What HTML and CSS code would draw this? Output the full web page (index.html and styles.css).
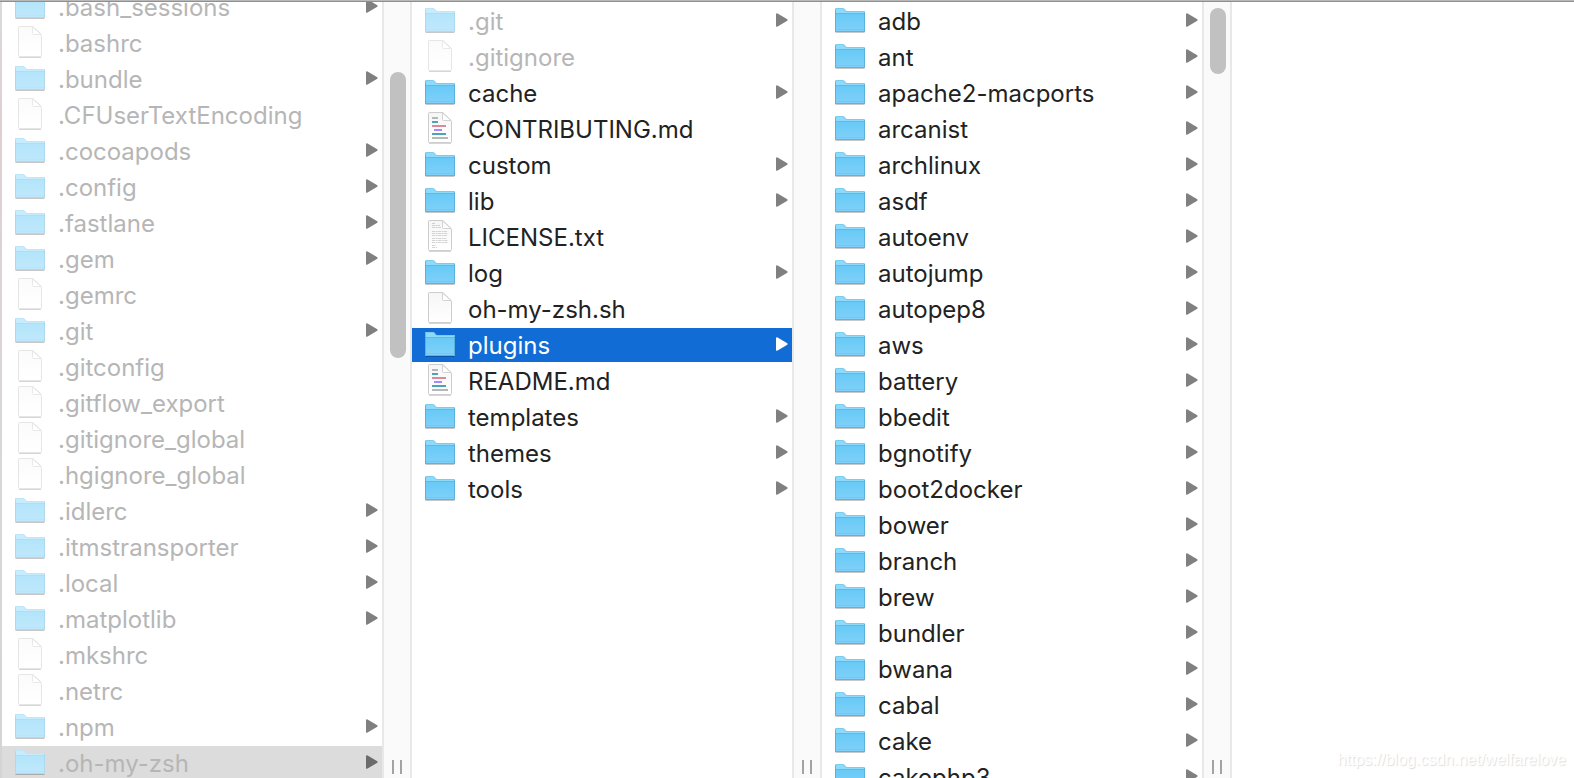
FILE: index.html
```html
<!DOCTYPE html>
<html lang="en">
<head>
<meta charset="utf-8">
<title>plugins</title>
<link rel="stylesheet" href="styles.css">
</head>
<body>
<svg class="sprite" aria-hidden="true">
  <defs>
    <linearGradient id="folder-fill" x1="0" y1="0" x2="0" y2="1">
      <stop offset="0" stop-color="#68caf6"/>
      <stop offset="1" stop-color="#80d1f9"/>
    </linearGradient>
    <linearGradient id="page-fill" x1="0" y1="0" x2="0" y2="1">
      <stop offset="0" stop-color="#f6f6f6"/>
      <stop offset="1" stop-color="#ffffff"/>
    </linearGradient>
  </defs>
  <symbol id="folder" viewBox="0 0 30 34">
    <path d="M0.5 28.500h29" stroke="#000" stroke-opacity=".22" stroke-width="1"/>
    <path d="M0 5.200Q0 4 1.200 4H8Q9 4 9.600 4.800L11 6.400Q11.500 7 12.500 7H29Q30 7 30 8V28H0z" fill="#8fd9fb"/>
    <path d="M0 10h30v17.200q0 .8-.8.8H.8q-.8 0-.8-.8z" fill="url(#folder-fill)"/>
    <path d="M0 9.500h30" stroke="#62b9e4" stroke-width="1"/>
    <path d="M0 25.500h30" stroke="#6cbfe8" stroke-width="1" opacity=".5"/>
    <path d="M.5 5.200V27.500h29V8" fill="none" stroke="#4fa6d2" stroke-width="1" opacity=".7"/>
    <path d="M.5 5.500Q.5 4.500 1.500 4.500H8L10.600 7.200Q11 7.500 12 7.500H29.500" fill="none" stroke="#6fc3ea" stroke-width="1" opacity=".6"/>
    <path class="veil" d="M0 5.200Q0 4 1.200 4H8Q9 4 9.600 4.800L11 6.400Q11.500 7 12.500 7H29Q30 7 30 8V28H0z"/>
  </symbol>
  <symbol id="page" viewBox="0 0 30 34">
    <path d="M4 31.500h22" stroke="#000" stroke-opacity=".16" stroke-width="1"/>
    <path d="M4.300.5H17Q18 .5 19 1.500L25.500 8Q26.500 9 26.500 10V29.700Q26.500 30.500 25.700 30.500H4.300Q3.500 30.500 3.500 29.700V1.300Q3.500.5 4.300.5z" fill="url(#page-fill)" stroke="#cdcdcd" stroke-width="1"/>
    <path d="M17.500 1V7.500Q17.500 8.500 18.500 8.500H26Z" fill="#fff" stroke="#d2d2d2" stroke-width="1"/>
    <path class="veil" d="M3 0H18L27 9V31H3z"/>
  </symbol>
  <symbol id="markdown" viewBox="0 0 30 34">
    <use href="#page"/>
    <path d="M7 6h6M7 26h16" stroke="#b5b8b8" stroke-width="2"/>
    <path d="M7 10h6M7 22h14" stroke="#4ba5b6" stroke-width="2"/>
    <path d="M7 14h14" stroke="#d98c98" stroke-width="2"/>
    <path d="M9 18h8" stroke="#a887ff" stroke-width="2"/>
  </symbol>
  <symbol id="text" viewBox="0 0 30 34">
    <use href="#page"/>
    <path d="M7 3.500h3M7 5.500h8M7 7.500h9M7 11.500h15M7 13.500h16M7 15.500h15M7 18.500h14M7 20.500h16M7 22.500h16M7 25.500h4M7 27.500h5" stroke="#777" stroke-opacity=".3" stroke-width="1" stroke-dasharray="3 .6 2 .5"/>
  </symbol>
  <symbol id="arrow" viewBox="0 0 12 14">
    <path d="M0 .8Q.6 0 1.600.4L11.300 6.200Q12 7 11.300 7.700L1.600 13.600Q.6 14 0 13.200z" fill="currentColor"/>
  </symbol>
</svg>
<main class="browser">
  <section class="column" aria-label="Home">
    <ul class="files scrolled" id="home"></ul>
    <div class="gutter"><span class="thumb thumb-home"></span><span class="grip"></span></div>
  </section>
  <section class="column" aria-label=".oh-my-zsh">
    <ul class="files" id="zsh"></ul>
    <div class="gutter"><span class="grip"></span></div>
  </section>
  <section class="column" aria-label="plugins">
    <ul class="files" id="plugins"></ul>
    <div class="gutter"><span class="thumb thumb-plugins"></span><span class="grip"></span></div>
  </section>
</main>
<p class="watermark">https://blog.csdn.net/welfarelove</p>
<script src="files.js"></script>
</body>
</html>
```
FILE: styles.css
```css
* {
  box-sizing: border-box;
}

body {
  display: flex;
  flex-direction: column;
  height: 100vh;
  margin: 0;
  overflow: hidden;
  border-top: 1px solid #b9b9b9;
  background: #fff;
  font-family: Inter, "Liberation Sans", sans-serif;
  font-size: 24px;
  line-height: 34px;
  color: #222;
}

.sprite {
  position: absolute;
  width: 0;
  height: 0;
}

.veil {
  fill: #fff;
  fill-opacity: var(--veil, 0);
}

.browser {
  display: flex;
  flex: 1;
  min-height: 0;
  overflow: hidden;
  padding-left: 2px;
  border-top: 1px solid #8f8f8f;
  background: linear-gradient(#dadadd, #e0cfd0 16%, #dbd3d6 35%, #d8d7da 60%, #d4d4d4) no-repeat left / 2px 100%;
}

.column {
  display: flex;
  flex: 0 0 410px;
  min-height: 0;
}

.files {
  flex: 1;
  display: flex;
  flex-direction: column;
  gap: 2px;
  margin: 0;
  padding: 2px 0 0;
  list-style: none;
}

.scrolled {
  margin-top: -14px;
}

.file {
  display: flex;
  align-items: center;
  width: 100%;
  height: 34px;
  padding: 0 4px 0 13px;
  border: 0;
  background: none;
  color: inherit;
  font: inherit;
  text-align: left;
}

.icon {
  flex: none;
  width: 30px;
  height: 34px;
  margin-right: 13px;
}

.name {
  flex: 1;
  padding-top: 2px;
  white-space: nowrap;
}

.arrow {
  width: 12px;
  height: 14px;
  margin-bottom: 2px;
  color: #808080;
}

.dimmed {
  --veil: 0.5;
}

.dimmed .name {
  color: #b6b6b6;
}

.opened {
  background: #dcdcdc;
}

.opened .arrow {
  color: #6b6b6b;
}

.selected {
  background: #116cd6;
  color: #fff;
}

.selected .arrow {
  color: #fff;
}

.gutter {
  display: flex;
  flex-direction: column;
  width: 30px;
  border: solid #e8e8e8;
  border-width: 0 2px;
  background: #fafafa;
}

.thumb {
  width: 16px;
  margin-left: 6px;
  border-radius: 8px;
  background: #c1c1c1;
}

.thumb-home {
  height: 286px;
  margin-top: 70px;
}

.thumb-plugins {
  height: 66px;
  margin-top: 6px;
}

.grip {
  width: 10px;
  height: 14px;
  margin: auto 0 4px 8px;
  border: solid #a3a3a3;
  border-width: 0 2px;
}

.watermark {
  position: absolute;
  right: 8px;
  bottom: 8px;
  margin: 0;
  font: 16px/20px "Liberation Sans", sans-serif;
  color: #fff;
  text-shadow: 1px 1px 1px #ddd;
}
```
FILE: files.js
```js
const columns = {
  home: [
    "folder .bash_sessions", "page .bashrc", "folder .bundle", "page .CFUserTextEncoding",
    "folder .cocoapods", "folder .config", "folder .fastlane", "folder .gem", "page .gemrc",
    "folder .git", "page .gitconfig", "page .gitflow_export", "page .gitignore_global",
    "page .hgignore_global", "folder .idlerc", "folder .itmstransporter", "folder .local",
    "folder .matplotlib", "page .mkshrc", "page .netrc", "folder .npm", "folder .oh-my-zsh"
  ],
  zsh: [
    "folder .git", "page .gitignore", "folder cache", "markdown CONTRIBUTING.md",
    "folder custom", "folder lib", "text LICENSE.txt", "folder log", "page oh-my-zsh.sh",
    "folder plugins", "markdown README.md", "folder templates", "folder themes", "folder tools"
  ],
  plugins: [
    "adb", "ant", "apache2-macports", "arcanist", "archlinux", "asdf", "autoenv", "autojump",
    "autopep8", "aws", "battery", "bbedit", "bgnotify", "boot2docker", "bower", "branch",
    "brew", "bundler", "bwana", "cabal", "cake", "cakephp3"
  ].map((name) => "folder " + name)
};

for (const [id, entries] of Object.entries(columns)) {
  document.getElementById(id).innerHTML = entries.map((entry) => {
    const [kind, name] = entry.split(" ");
    const classes = ["file"];
    if (name.startsWith(".")) classes.push("dimmed");
    if (name === ".oh-my-zsh") classes.push("opened");
    if (name === "plugins") classes.push("selected");
    const arrow = kind === "folder"
      ? '<svg class="arrow" aria-hidden="true"><use href="#arrow"/></svg>' : "";
    return `<li><button type="button" class="${classes.join(" ")}">` +
      `<svg class="icon" aria-hidden="true"><use href="#${kind}"/></svg>` +
      `<span class="name">${name}</span>${arrow}</button></li>`;
  }).join("");
}
```
